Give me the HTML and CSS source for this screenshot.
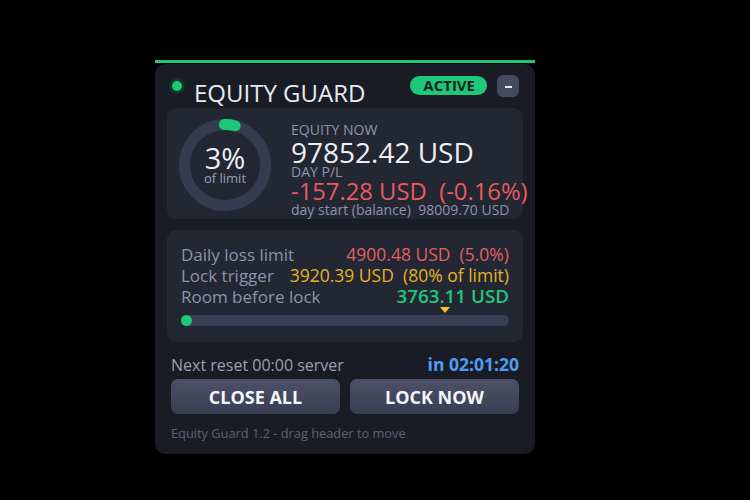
FILE: index.html
```html
<!DOCTYPE html>
<html>
<head>
<meta charset="utf-8">
<link rel="stylesheet" href="styles.css">
</head>
<body>
<div class="widget">
  <div class="accent"></div>
  <div class="panel">
    <div class="header">
      <span class="dot"></span>
      <span class="title">EQUITY GUARD</span>
      <span class="spacer"></span>
      <span class="pill">ACTIVE</span>
      <span class="minbtn"><span class="dash"></span></span>
    </div>

    <div class="card summary">
      <div class="donut">
        <svg width="92" height="92" viewBox="0 0 92 92">
          <circle cx="46" cy="46" r="40.5" fill="none" stroke="#363b4f" stroke-width="11"/>
          <circle cx="46" cy="46" r="40.5" fill="none" stroke="#1ec878" stroke-width="11" stroke-linecap="round" stroke-dasharray="11 300" transform="rotate(-91 46 46)"/>
        </svg>
        <div class="donut-label">
          <div class="pct">3%</div>
          <div class="of">of limit</div>
        </div>
      </div>
      <div class="equity">
        <div class="lbl">EQUITY NOW</div>
        <div class="big">97852.42 USD</div>
        <div class="lbl tight">DAY P/L</div>
        <div class="pl">-157.28 USD&nbsp;&nbsp;(-0.16%)</div>
        <div class="start">day start (balance)&nbsp;&nbsp;98009.70 USD</div>
      </div>
    </div>

    <div class="card limits">
      <div class="row"><span class="k">Daily loss limit</span><span class="v red">4900.48 USD&nbsp;&nbsp;(5.0%)</span></div>
      <div class="row"><span class="k">Lock trigger</span><span class="v yellow">3920.39 USD&nbsp;&nbsp;(80% of limit)</span></div>
      <div class="row"><span class="k">Room before lock</span><span class="v green">3763.11 USD</span></div>
      <div class="bar">
        <span class="knob"></span>
        <span class="marker" style="left: 79%"></span>
      </div>
    </div>

    <div class="footer">
      <div class="reset"><span>Next reset 00:00 server</span><span class="countdown">in 02:01:20</span></div>
      <div class="buttons">
        <button class="btn">CLOSE ALL</button>
        <button class="btn">LOCK NOW</button>
      </div>
      <div class="note">Equity Guard 1.2 - drag header to move</div>
    </div>
  </div>
</div>
</body>
</html>
```

FILE: styles.css
```css
* { box-sizing: border-box; }
html, body { margin: 0; padding: 0; background: #000; }
body {
  font-family: "Open Sans", "Noto Sans", sans-serif;
  width: 750px;
  height: 500px;
  overflow: hidden;
}
.widget {
  width: 380px;
  margin: 60px 0 0 155px;
}
.accent {
  height: 3px;
  background: #1ec878;
}
.panel {
  margin-top: 1px;
  background: #1a1c25;
  border-radius: 10px;
  padding: 0 12px;
  height: 390px;
}
.header {
  display: flex;
  align-items: flex-start;
  height: 44px;
  padding: 11px 4px 0 0;
}
.dot {
  width: 16px;
  height: 16px;
  border-radius: 50%;
  background: #1ec878;
  border: 3px solid #0c3826;
  margin: 3px 0 0 2px;
}
.title {
  margin: 4px 0 0 9px;
  font-size: 24px;
  line-height: 28px;
  color: #e8eaf2;
}
.spacer { flex: 1; }
.pill {
  margin-top: 1px;
  height: 19px;
  padding: 0 12px 0 13px;
  border-radius: 10px;
  background: #1ec878;
  color: #0b2418;
  font-weight: 700;
  font-size: 15px;
  line-height: 19px;
}
.minbtn {
  margin-left: 10px;
  width: 22px;
  height: 22px;
  border-radius: 6px;
  background: #454a63;
  display: flex;
  align-items: center;
  justify-content: center;
}
.dash {
  width: 7px;
  height: 2px;
  background: #e8eaf2;
  margin-top: 2px;
}
.card {
  background: #232633;
  border-radius: 9px;
}
.summary {
  height: 111px;
  display: flex;
  align-items: flex-start;
  padding-left: 12px;
}
.donut {
  position: relative;
  width: 92px;
  height: 92px;
  margin-top: 11px;
  flex: none;
}
.donut svg { display: block; }
.donut-label {
  position: absolute;
  inset: 0;
  display: flex;
  flex-direction: column;
  align-items: center;
  justify-content: center;
}
.pct {
  font-size: 29px;
  line-height: 28px;
  color: #eef0f6;
  margin-top: -1px;
}
.of {
  font-size: 13px;
  line-height: 13px;
  color: #9aa0b6;
}
.equity {
  margin-left: 20px;
  display: flex;
  flex-direction: column;
  padding-top: 14px;
  white-space: nowrap;
}
.lbl {
  font-size: 14px;
  line-height: 16px;
  color: #8e94ad;
}
.lbl.tight { line-height: 10px; }
.big {
  font-size: 28px;
  line-height: 29px;
  color: #eef0f6;
}
.pl {
  font-size: 23.8px;
  line-height: 28px;
  color: #ea5b5b;
}
.start {
  font-size: 14px;
  line-height: 10px;
  color: #8e94ad;
}
.limits {
  margin-top: 11px;
  height: 112px;
  padding: 14px 14px 0 14px;
}
.row {
  display: flex;
  justify-content: space-between;
  align-items: baseline;
  font-size: 17px;
  line-height: 21px;
}
.k { color: #8e93aa; }
.v { font-size: 17.5px; }
.red { color: #e06262; }
.yellow { color: #e3b324; }
.green { color: #1ec878; font-weight: 600; font-size: 18.8px; }
.bar {
  position: relative;
  margin-top: 8px;
  height: 11px;
  border-radius: 6px;
  background: #393e54;
}
.knob {
  position: absolute;
  left: 0;
  top: 0;
  width: 11px;
  height: 11px;
  border-radius: 50%;
  background: #1ec878;
}
.marker {
  position: absolute;
  top: -8px;
  width: 0;
  height: 0;
  border-left: 5px solid transparent;
  border-right: 5px solid transparent;
  border-top: 6px solid #f5c518;
}
.footer {
  padding: 12px 4px 0 4px;
}
.reset {
  display: flex;
  justify-content: space-between;
  align-items: baseline;
  font-size: 16px;
  line-height: 20px;
  color: #9a9fb3;
}
.countdown {
  color: #4d9ef2;
  font-weight: 700;
  font-size: 17.5px;
}
.buttons {
  display: flex;
  gap: 10px;
  margin-top: 4px;
}
.btn {
  flex: 1;
  height: 35px;
  border: none;
  border-radius: 7px;
  background: linear-gradient(#4c5168, #393d51);
  color: #f4f5f8;
  font-family: "Open Sans", "Noto Sans", sans-serif;
  font-weight: 700;
  font-size: 18px;
  padding: 0;
}
.note {
  margin-top: 11px;
  font-size: 12.8px;
  line-height: 16px;
  color: #5c6178;
}
```
